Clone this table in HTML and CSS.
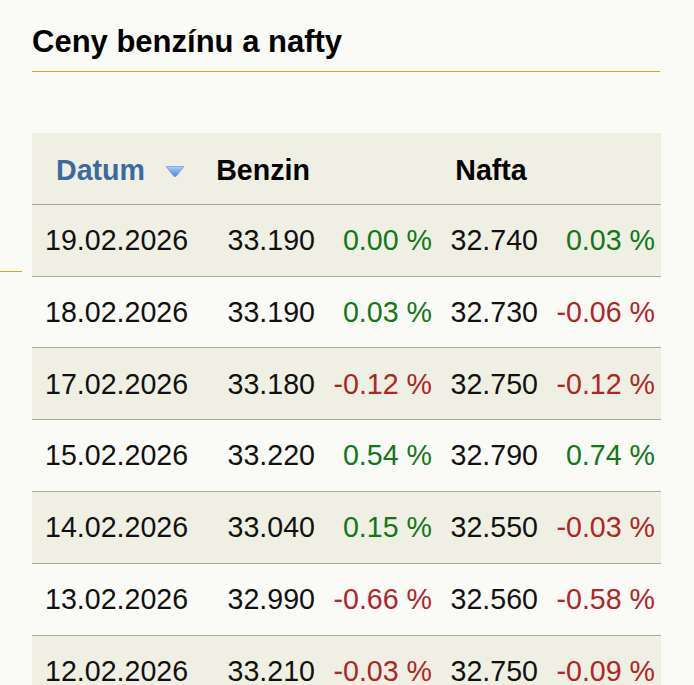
FILE: index.html
```html
<!DOCTYPE html>
<html lang="cs">
<head>
<meta charset="utf-8">
<title>Ceny benzínu a nafty</title>
<link rel="stylesheet" href="styles.css">
</head>
<body>
<div class="page">
  <aside class="side"><div class="side-rule"></div></aside>
  <main class="main">
    <h1 class="title">Ceny benzínu a nafty</h1>
    <table class="prices">
      <colgroup>
        <col class="c-date"><col class="c-val"><col class="c-chg"><col class="c-val2"><col class="c-chg">
      </colgroup>
      <thead>
        <tr>
          <th class="th-date"><span class="sort-link">Datum</span><svg class="sort-icon" width="20" height="13" viewBox="0 0 20 13"><defs><linearGradient id="g" x1="0" y1="0" x2="0" y2="1"><stop offset="0" stop-color="#b9d3f6"/><stop offset="0.3" stop-color="#8db6ee"/><stop offset="1" stop-color="#4f86dc"/></linearGradient></defs><path d="M1 1.5 H19 L11.2 11.2 Q10 12.4 8.8 11.2 Z" fill="url(#g)" stroke="#6f9ee6" stroke-width="0.8"/></svg></th>
          <th class="th-c">Benzin</th>
          <th></th>
          <th class="th-c">Nafta</th>
          <th></th>
        </tr>
      </thead>
      <tbody>
        <tr class="odd"><td class="d">19.02.2026</td><td class="n">33.190</td><td class="n up">0.00 %</td><td class="n">32.740</td><td class="n up">0.03 %</td></tr>
        <tr><td class="d">18.02.2026</td><td class="n">33.190</td><td class="n up">0.03 %</td><td class="n">32.730</td><td class="n down">-0.06 %</td></tr>
        <tr class="odd"><td class="d">17.02.2026</td><td class="n">33.180</td><td class="n down">-0.12 %</td><td class="n">32.750</td><td class="n down">-0.12 %</td></tr>
        <tr><td class="d">15.02.2026</td><td class="n">33.220</td><td class="n up">0.54 %</td><td class="n">32.790</td><td class="n up">0.74 %</td></tr>
        <tr class="odd"><td class="d">14.02.2026</td><td class="n">33.040</td><td class="n up">0.15 %</td><td class="n">32.550</td><td class="n down">-0.03 %</td></tr>
        <tr><td class="d">13.02.2026</td><td class="n">32.990</td><td class="n down">-0.66 %</td><td class="n">32.560</td><td class="n down">-0.58 %</td></tr>
        <tr class="odd"><td class="d">12.02.2026</td><td class="n">33.210</td><td class="n down">-0.03 %</td><td class="n">32.750</td><td class="n down">-0.09 %</td></tr>
      </tbody>
    </table>
  </main>
</div>
</body>
</html>
```
FILE: styles.css
```css
html, body {
  margin: 0;
  padding: 0;
  background: #fafaf6;
  font-family: "Liberation Sans", Arial, sans-serif;
  color: #111;
}
.page {
  display: flex;
  align-items: flex-start;
  overflow: hidden;
  height: 685px;
}
.side {
  width: 22px;
  flex: 0 0 22px;
  margin-right: 10px;
}
.side-rule {
  height: 271px;
  border-bottom: 1px solid #d0a628;
}
.main {
  width: 628px;
  flex: 0 0 628px;
}
.title {
  margin: 24px 0 0;
  font-size: 31px;
  font-weight: bold;
  line-height: 35.5px;
  padding-bottom: 11.5px;
  border-bottom: 1px solid #d0a628;
  color: #000;
}
.prices {
  margin-top: 61px;
  width: 628px;
  border-collapse: collapse;
  table-layout: fixed;
  font-size: 28.6px;
}
.c-date { width: 173px; }
.c-val { width: 116px; }
.c-chg { width: 117px; }
.c-val2 { width: 106px; }
.prices th, .prices td {
  padding: 19.3px 6px;
  line-height: 32.2px;
  white-space: nowrap;
}
.prices thead tr {
  background: #efefe4;
}
.prices th {
  font-weight: bold;
  color: #000;
  border-bottom: 1px solid #a8a8a0;
  padding-top: 21.3px;
  padding-bottom: 17.3px;
}
.th-date {
  text-align: left;
  padding-left: 24px !important;
}
.sort-link {
  color: #3b6a9e;
}
.sort-icon {
  margin-left: 20px;
  vertical-align: 2px;
}
.th-c {
  text-align: center;
}
.prices td {
  border-bottom: 1px solid #aaaaa2;
}
.prices tr.odd {
  background: #efefe4;
}
.d {
  text-align: left;
  padding-left: 13px !important;
}
.n {
  text-align: right;
}
.up { color: #12771a; }
.down { color: #b02528; }
```
